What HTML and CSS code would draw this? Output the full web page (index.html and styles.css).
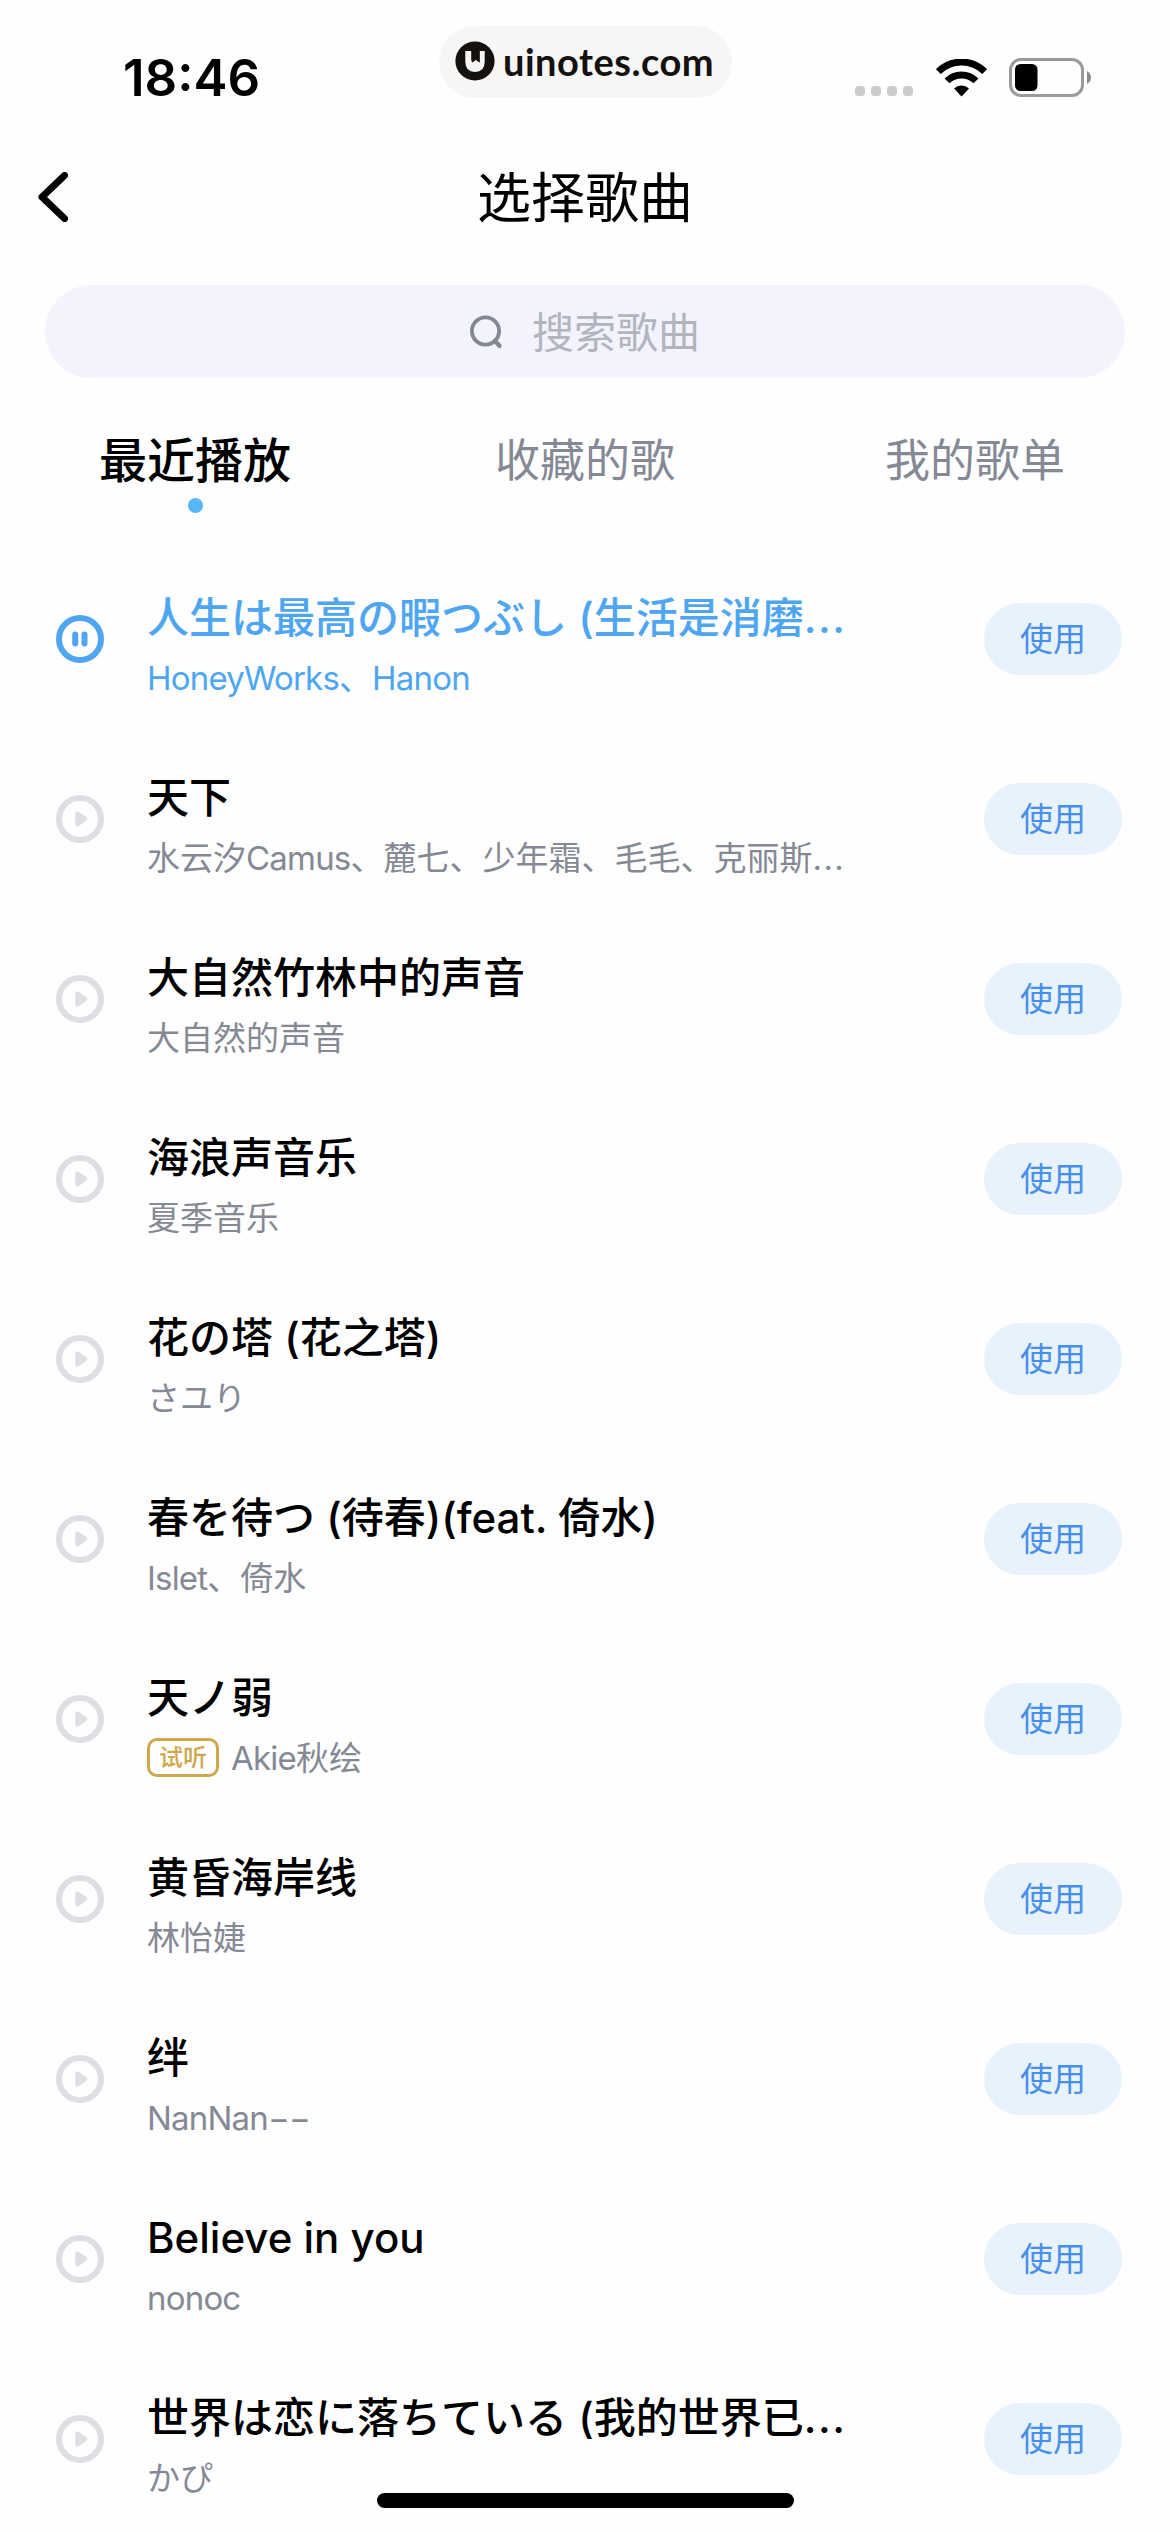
FILE: index.html
```html
<!DOCTYPE html>
<html lang="zh-CN">
<head>
<meta charset="utf-8">
<title>选择歌曲</title>
<link rel="stylesheet" href="styles.css">
</head>
<body>
<svg class="defs" width="0" height="0">
  <symbol id="play" viewBox="0 0 48 48">
    <circle cx="24" cy="24" r="21" fill="none" stroke="currentColor" stroke-width="6"/>
    <path d="M21.3 18.3 L29.3 24 L21.3 29.7 Z" fill="currentColor" stroke="currentColor" stroke-width="4" stroke-linejoin="round"/>
  </symbol>
  <symbol id="pause" viewBox="0 0 48 48">
    <circle cx="24" cy="24" r="21" fill="none" stroke="currentColor" stroke-width="6"/>
    <path d="M19.2 19.5 V28.5 M28.5 19.5 V28.5" fill="none" stroke="currentColor" stroke-width="6" stroke-linecap="round"/>
  </symbol>
</svg>
<div class="screen">
  <header class="status">
    <div class="time">18:46</div>
    <div class="site">
      <svg class="site-logo" viewBox="0 0 40 40">
        <circle cx="20" cy="20" r="19.6" fill="#15110f"/>
        <path d="M10.3 10 H16.2 V18.5 Q16.2 20.5 17.6 21.3 L20.6 18.8 L24.6 21.6 V10 H29.7 V20.5 Q29.7 31 20 31 Q10.3 31 10.3 20.5 Z" fill="#f6f6f6"/>
        <path d="M17.4 9 H24.6 V21.6 L21 18.6 L17.4 21.6 Z" fill="#15110f"/>
      </svg>
      <span class="site-name">uinotes.com</span>
    </div>
    <div class="indicators">
      <div class="signal"><i></i><i></i><i></i><i></i></div>
      <svg class="wifi" viewBox="0 0 51 38">
        <path d="M2.3 12.6 A33 33 0 0 1 48.7 12.6" fill="none" stroke="#000" stroke-width="7"/>
        <path d="M11 21.9 A20.5 20.5 0 0 1 40 21.9" fill="none" stroke="#000" stroke-width="7"/>
        <path d="M25.5 37.5 L18 29.6 A10.8 10.8 0 0 1 33 29.6 Z"/>
      </svg>
      <svg class="battery" viewBox="0 0 82 39">
        <rect x="1.5" y="1.5" width="72" height="36" rx="10.5" fill="none" stroke="#9a9a9a" stroke-width="3"/>
        <rect x="6" y="6" width="22.5" height="27" rx="5.5"/>
        <path d="M78 13 Q82 15.5 82 19.5 Q82 23.5 78 26 Z" fill="#8c8c8c"/>
      </svg>
    </div>
  </header>

  <nav class="navbar">
    <svg class="back" viewBox="0 0 30 50"><path d="M26.5 3.5 L4 25 L26.5 46.5" fill="none" stroke="#000" stroke-width="7" stroke-linecap="round" stroke-linejoin="round"/></svg>
    <h1 class="page-title">选择歌曲</h1>
  </nav>

  <div class="search">
    <svg class="search-icon" viewBox="0 0 34 34"><circle cx="16.5" cy="16" r="13.6" fill="none" stroke="#858792" stroke-width="3.8"/><path d="M26 26 L30.5 30.8" stroke="#858792" stroke-width="4.5" stroke-linecap="round"/></svg>
    <span class="placeholder">搜索歌曲</span>
  </div>

  <div class="tabs">
    <div class="tab active">最近播放</div>
    <div class="tab">收藏的歌</div>
    <div class="tab">我的歌单</div>
  </div>

  <main class="songs">
    <div class="song playing"><svg class="state"><use href="#pause"/></svg><div class="info"><div class="name">人生は最高の暇つぶし (生活是消磨<span class="dots">...</span></div><div class="artist"><span class="latin">HoneyWorks</span>、<span class="latin">Hanon</span></div></div><div class="use">使用</div></div>
    <div class="song"><svg class="state"><use href="#play"/></svg><div class="info"><div class="name">天下</div><div class="artist">水云汐<span class="latin">Camus</span>、麓七、少年霜、毛毛、克丽斯<span class="dots">...</span></div></div><div class="use">使用</div></div>
    <div class="song"><svg class="state"><use href="#play"/></svg><div class="info"><div class="name">大自然竹林中的声音</div><div class="artist">大自然的声音</div></div><div class="use">使用</div></div>
    <div class="song"><svg class="state"><use href="#play"/></svg><div class="info"><div class="name">海浪声音乐</div><div class="artist">夏季音乐</div></div><div class="use">使用</div></div>
    <div class="song"><svg class="state"><use href="#play"/></svg><div class="info"><div class="name">花の塔 (花之塔)</div><div class="artist">さユり</div></div><div class="use">使用</div></div>
    <div class="song"><svg class="state"><use href="#play"/></svg><div class="info"><div class="name">春を待つ (待春)(feat. 倚水)</div><div class="artist"><span class="latin">Islet</span>、倚水</div></div><div class="use">使用</div></div>
    <div class="song"><svg class="state"><use href="#play"/></svg><div class="info"><div class="name">天ノ弱</div><div class="artist"><span class="trial">试听</span><span class="latin">Akie</span>秋绘</div></div><div class="use">使用</div></div>
    <div class="song"><svg class="state"><use href="#play"/></svg><div class="info"><div class="name">黄昏海岸线</div><div class="artist">林怡婕</div></div><div class="use">使用</div></div>
    <div class="song"><svg class="state"><use href="#play"/></svg><div class="info"><div class="name">绊</div><div class="artist"><span class="latin">NanNan−−</span></div></div><div class="use">使用</div></div>
    <div class="song"><svg class="state"><use href="#play"/></svg><div class="info"><div class="name">Believe in you</div><div class="artist"><span class="latin">nonoc</span></div></div><div class="use">使用</div></div>
    <div class="song"><svg class="state"><use href="#play"/></svg><div class="info"><div class="name">世界は恋に落ちている (我的世界已<span class="dots">...</span></div><div class="artist">かぴ</div></div><div class="use">使用</div></div>
  </main>
  <div class="home-bar"></div>
</div>
</body>
</html>
```
FILE: styles.css
```css
* { box-sizing: border-box; }
body {
  margin: 0;
  background: #fefefe;
  color: #000;
  font-family: Inter, "Noto Sans CJK SC", sans-serif;
}
.defs { position: absolute; }
.screen {
  position: relative;
  width: 1170px;
  height: 2532px;
  overflow: hidden;
}

.status {
  display: grid;
  grid-template-columns: 439px 293px 1fr;
  height: 141px;
}
.time {
  padding: 47px 0 0 123px;
  font-size: 51px;
  font-weight: 600;
  line-height: 62px;
}
.site {
  display: flex;
  align-items: center;
  height: 72px;
  margin-top: 26px;
  padding: 0 0 2px 16px;
  border-radius: 36px;
  background: #f6f6f6;
}
.site-logo { width: 40px; height: 40px; margin-right: 8px; }
.site-name {
  color: #15110f;
  font-family: Lato, sans-serif;
  font-size: 38px;
  font-weight: 700;
  letter-spacing: 0.5px;
  line-height: 46px;
}
.indicators { display: flex; padding-left: 123px; }
.signal { display: flex; gap: 6px; margin-top: 86px; }
.signal i { width: 10px; height: 10px; border-radius: 3.5px; background: #ccc; }
.wifi { width: 51px; height: 38px; margin: 59px 0 0 23px; }
.battery { width: 82px; height: 39px; margin: 58px 0 0 22px; }

.navbar {
  display: grid;
  grid-template-columns: 68px 1fr 68px;
  align-items: center;
  height: 112px;
}
.back { width: 30px; height: 50px; margin-left: 38px; }
.page-title {
  margin: 0;
  padding-top: 4px;
  font-size: 54px;
  font-weight: 400;
  line-height: 80px;
  text-align: center;
}

.search {
  display: flex;
  align-items: center;
  justify-content: center;
  gap: 29px;
  height: 93px;
  margin: 32px 45px 0;
  padding-right: 1px;
  border-radius: 47px;
  background: #f2f3fc;
}
.search-icon { width: 34px; height: 34px; }
.placeholder { padding-top: 3px; color: #b2b5be; font-size: 42px; line-height: 60px; }

.tabs {
  display: grid;
  grid-template-columns: repeat(3, 1fr);
  height: 171px;
  padding-top: 48px;
}
.tab {
  color: #858995;
  font-size: 45px;
  line-height: 70px;
  text-align: center;
}
.tab.active {
  color: #000;
  font-size: 48px;
  font-weight: 500;
}
.tab.active::after {
  content: "";
  display: block;
  width: 15px;
  height: 15px;
  margin: 2px auto 0;
  border-radius: 50%;
  background: #56b6f7;
}

.song {
  display: grid;
  grid-template-columns: 91px 1fr 138px;
  align-items: center;
  height: 180px;
  padding: 0 48px 0 56px;
}
.state { width: 48px; height: 48px; color: #dedfe4; }
.info { padding-top: 17px; }
.name {
  font-size: 42px;
  font-weight: 500;
  line-height: 60px;
  white-space: nowrap;
}
.artist {
  display: flex;
  align-items: center;
  color: #858995;
  font-size: 33px;
  line-height: 60px;
  white-space: nowrap;
}
.latin { letter-spacing: -0.8px; }
.name .dots { letter-spacing: 1.6px; }
.artist .dots { letter-spacing: 1.4px; }
.playing .state, .playing .name, .playing .artist { color: #4ea6f3; }
.trial {
  width: 72px;
  height: 39px;
  margin-right: 12px;
  border: 3px solid #cfa84e;
  border-radius: 10px;
  color: #cfa84e;
  font-size: 24px;
  font-weight: 500;
  line-height: 33px;
  text-align: center;
}
.use {
  height: 72px;
  border-radius: 36px;
  background: #e7f2fd;
  color: #468fec;
  font-size: 33px;
  line-height: 73px;
  text-align: center;
}
.home-bar {
  position: absolute;
  left: 377px;
  bottom: 24px;
  width: 417px;
  height: 15px;
  border-radius: 8px;
  background: #000;
}
```
